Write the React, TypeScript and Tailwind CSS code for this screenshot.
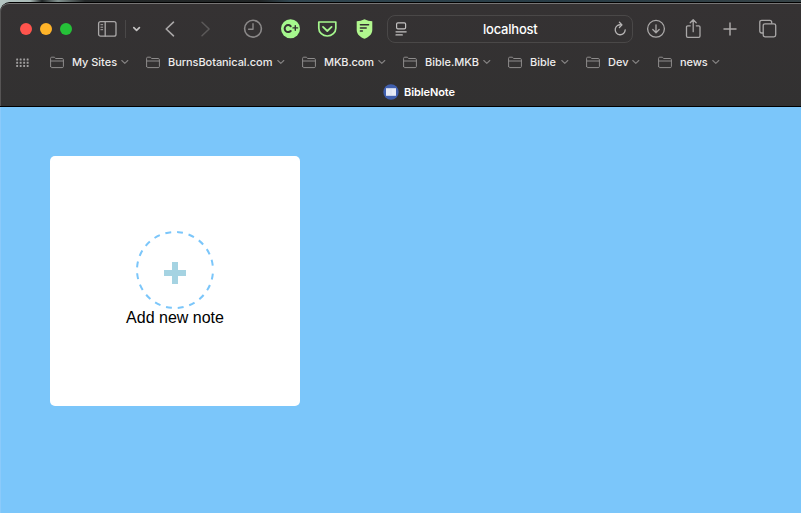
import React from "react";

const bookmarks = [
  { name: "My Sites", box: "w-24", text: "w-[45px] tracking-[-0.03px]" },
  { name: "BurnsBotanical.com", box: "w-[156px]", text: "w-[105px] tracking-[-0.07px]" },
  { name: "MKB.com", box: "w-[101px]", text: "w-[50px] tracking-[-0.15px]" },
  { name: "Bible.MKB", box: "w-[105px]", text: "w-[54px] tracking-[-0.03px]" },
  { name: "Bible", box: "w-[78px]", text: "w-[27px]" },
  { name: "Dev", box: "w-[72px]", text: "w-[20px]" },
  { name: "news", box: "w-[72px]", text: "w-[28px] tracking-[-0.1px]" },
];

const dashes = Array.from({ length: 20 }, (_, i) => (i < 19 ? "9 8.84" : "9 12.04")).join(" ");

type IconProps = { w: number; h: number; className?: string; sw?: number; children: React.ReactNode };

function Icon({ w, h, className = "", sw = 1.3, children }: IconProps) {
  return (
    <svg
      width={w}
      height={h}
      viewBox={`0 0 ${w} ${h}`}
      fill="none"
      stroke="currentColor"
      strokeWidth={sw}
      strokeLinecap="round"
      strokeLinejoin="round"
      className={`shrink-0 ${className}`}
    >
      {children}
    </svg>
  );
}

function Toolbar() {
  return (
    <div className="flex h-[50px] items-center pl-[19px] text-[#aaa8a8]">
      <div className="flex gap-2">
        <span className="size-3 rounded-full bg-[#ff544d]" />
        <span className="size-3 rounded-full bg-[#ffb429]" />
        <span className="size-3 rounded-full bg-[#25c138]" />
      </div>
      <Icon w={20} h={18} className="ml-[25px]">
        <rect x="1.6" y="1.6" width="17.4" height="14.6" rx="2" />
        <path d="M8.2 2v14" />
        <path d="M3.9 4.7h1.8M3.9 7.2h1.8M3.9 9.7h1.8" strokeWidth="1" />
      </Icon>
      <span className="ml-[8px] h-[18px] w-px bg-[#4a4848]" />
      <Icon w={9} h={8} sw={1.7} className="ml-[6px] text-[#c4c2c2]">
        <path d="M1.8 2.6l2.8 2.7 2.8-2.7" />
      </Icon>
      <Icon w={12} h={18} sw={1.6} className="ml-[23px]">
        <path d="M9.5 2.2L2.2 9l7.3 6.8" />
      </Icon>
      <Icon w={12} h={18} sw={1.5} className="ml-6 text-[#5b5959]">
        <path d="M2 2.2L9.1 9 2 15.8" />
      </Icon>
      <Icon w={20} h={20} sw={1.6} className="ml-[31px] text-[#8b8989]">
        <circle cx="10" cy="9.7" r="8.4" />
        <path d="M10 4.8v5.4H5.6" strokeWidth="1.4" />
      </Icon>
      <Icon w={20} h={20} className="ml-[18px]">
        <circle cx="9.5" cy="9.7" r="9.5" fill="#a5f78d" stroke="none" />
        <path d="M9.7 7.2A3.5 3.5 0 1 0 9.7 12" stroke="#343132" strokeWidth="2" />
        <path d="M12 8.9h4.6M14.3 6.6v4.6" stroke="#343132" strokeWidth="1.4" />
      </Icon>
      <Icon w={20} h={20} sw={1.7} className="ml-4 text-[#a5f78d]">
        <path d="M1.8 3h17v6.2a8.5 7.8 0 0 1-17 0z" />
        <path d="M6 7.9l4.3 4.1 4.3-4.1" strokeWidth="1.8" />
      </Icon>
      <Icon w={18} h={20} className="ml-[18px]">
        <path d="M9.5 .3C12 1.7 14.5 2 17.3 2.2v8.7c0 4.5-4 7.4-7.8 8.8-3.8-1.4-7.8-4.3-7.8-8.8V2.2C4.5 2 7 1.7 9.5 .3z" fill="#b1f78e" stroke="none" />
        <path d="M5.4 5.8h8.2M5.4 8.9h5.8M5.4 12h2" stroke="#343132" strokeWidth="1.5" />
      </Icon>
      <div className="ml-[14px] flex h-7 w-[246px] items-center rounded-lg border border-[#4a4848]">
        <Icon w={12} h={16} sw={1.2} className="ml-[7px] text-[#c4c2c2]">
          <rect x="1.6" y="1.8" width="9" height="6" rx="1.3" />
          <path d="M1 10.8h10.2M1 13.9h6.3" />
        </Icon>
        <span className="ml-[76px] w-[56px] whitespace-nowrap text-[13px] leading-4 font-medium tracking-[-0.22px] text-white">localhost</span>
        <Icon w={14} h={16} className="ml-[74px] text-[#b8b6b6]">
          <path d="M8.4 3.9A5 5 0 1 0 12.2 8.8" />
          <path d="M6.4 1.3L9 3.9 6.4 6.5" />
        </Icon>
      </div>
      <Icon w={20} h={20} className="ml-[13px]">
        <circle cx="10" cy="9.8" r="8.4" />
        <path d="M10 5.8v7.8M6.8 10.5l3.2 3.2 3.2-3.2" />
      </Icon>
      <Icon w={16} h={22} className="ml-[19px]">
        <path d="M5.2 7.8H2.8c-.8 0-1.3.5-1.3 1.3v9c0 .8.5 1.3 1.3 1.3h10.9c.8 0 1.3-.5 1.3-1.3v-9c0-.8-.5-1.3-1.3-1.3h-2.4M8.2 13.7V2M5.2 4.7L8.2 1.7l3 3" />
      </Icon>
      <Icon w={14} h={14} sw={1.5} className="ml-[22px]">
        <path d="M1 7h12M7 1v12" />
      </Icon>
      <Icon w={20} h={20} className="ml-[21px]">
        <path d="M5 14H3.7c-1.2 0-1.9-.7-1.9-1.9V3.2c0-1.2.7-1.9 1.9-1.9h8.1c1.2 0 1.9.7 1.9 1.9v1" />
        <rect x="5.2" y="4.8" width="12.5" height="13" rx="1.8" />
      </Icon>
    </div>
  );
}

function BookmarkBar() {
  return (
    <div className="flex h-4 items-center pl-[15px]">
      <svg width="14" height="10" viewBox="0 0 14 10" fill="#a19f9f" className="mr-5 mt-0.5 shrink-0">
        {[0, 1, 2].map((r) =>
          [0, 1, 2, 3].map((c) => <rect key={`${r}-${c}`} x={c * 3.5 + 0.2} y={r * 3.2 + 0.6} width="1.9" height="1.9" rx="0.3" />)
        )}
      </svg>
      {bookmarks.map((b) => (
        <div key={b.name} className={`flex shrink-0 items-center ${b.box}`}>
          <Icon w={14} h={13} sw={1} className="text-[#8e8c8c]">
            <path d="M.6 10.4V2.3C.6 1.6 1 1.2 1.7 1.2h2.6l1.4 1.3h6.5c.7 0 1.2.4 1.2 1.1v6.9c0 .7-.5 1.1-1.2 1.1H1.8c-.7 0-1.2-.5-1.2-1.2zM.8 5h12.5" />
          </Icon>
          <span className={`ml-2 whitespace-nowrap text-[11px] leading-4 font-medium text-[#eeecec] ${b.text}`}>{b.name}</span>
          <Icon w={8} h={6} sw={1.1} className="ml-1 text-[#858383]">
            <path d="M.8 1.5l3 2.8 3-2.8" />
          </Icon>
        </div>
      ))}
    </div>
  );
}

export default function App() {
  return (
    <div className="flex h-[513px] w-[801px] flex-col overflow-hidden bg-[#7bc6fa] font-['Inter',sans-serif]">
      <header className="h-[107px] shrink-0 bg-[linear-gradient(90deg,#b5c5c2_0px,#a9b9b7_30px,#202526_42px,#839391_58px,#242829_85px,#202425_260px,#314650_290px,#273b45_560px,#364246_801px)] pt-0.5">
        <div className="flex h-[105px] flex-col rounded-tl-[10px] border-t border-b border-black bg-[#343233]">
          <div className="h-[103px] rounded-tl-[9px] border-t border-l border-t-[#777575] border-l-[#565454] bg-linear-to-b from-[#353233] to-[#323131]">
            <Toolbar />
            <BookmarkBar />
            <div className="mt-[14px] flex h-4 items-center pl-[382px]">
              <svg width="16" height="16" viewBox="0 0 16 16" className="shrink-0">
                <circle cx="8" cy="8" r="7.7" fill="#405fae" />
                <path d="M3 4.2h10v7.6H3z" fill="#e6eaf6" />
                <path d="M8 4.5v7" stroke="#cdd5ec" strokeWidth=".6" />
              </svg>
              <span className="ml-[5px] whitespace-nowrap text-[11px] leading-4 font-semibold tracking-[-0.08px] text-white">BibleNote</span>
            </div>
          </div>
        </div>
      </header>
      <main className="flex-1 border-l border-[#8bcafa] pl-[49px] pt-[49px]">
        <button className="flex size-[250px] flex-col items-center rounded-[5px] bg-white pt-[75px] font-['Liberation_Sans',Arial,sans-serif] text-black">
          <svg width="78" height="78" viewBox="0 0 78 78" className="shrink-0">
            <circle cx="39" cy="39" r="38" fill="none" stroke="#7bc6fa" strokeWidth="2" pathLength="360" strokeDasharray={dashes} transform="rotate(5.5 39 39)" />
            <path d="M36 31h6v8h8v6h-8v8h-6v-8h-8v-6h8z" fill="#a5d3e2" />
          </svg>
          <span className="h-[18px] whitespace-nowrap text-base leading-[18px]">Add new note</span>
        </button>
      </main>
    </div>
  );
}
